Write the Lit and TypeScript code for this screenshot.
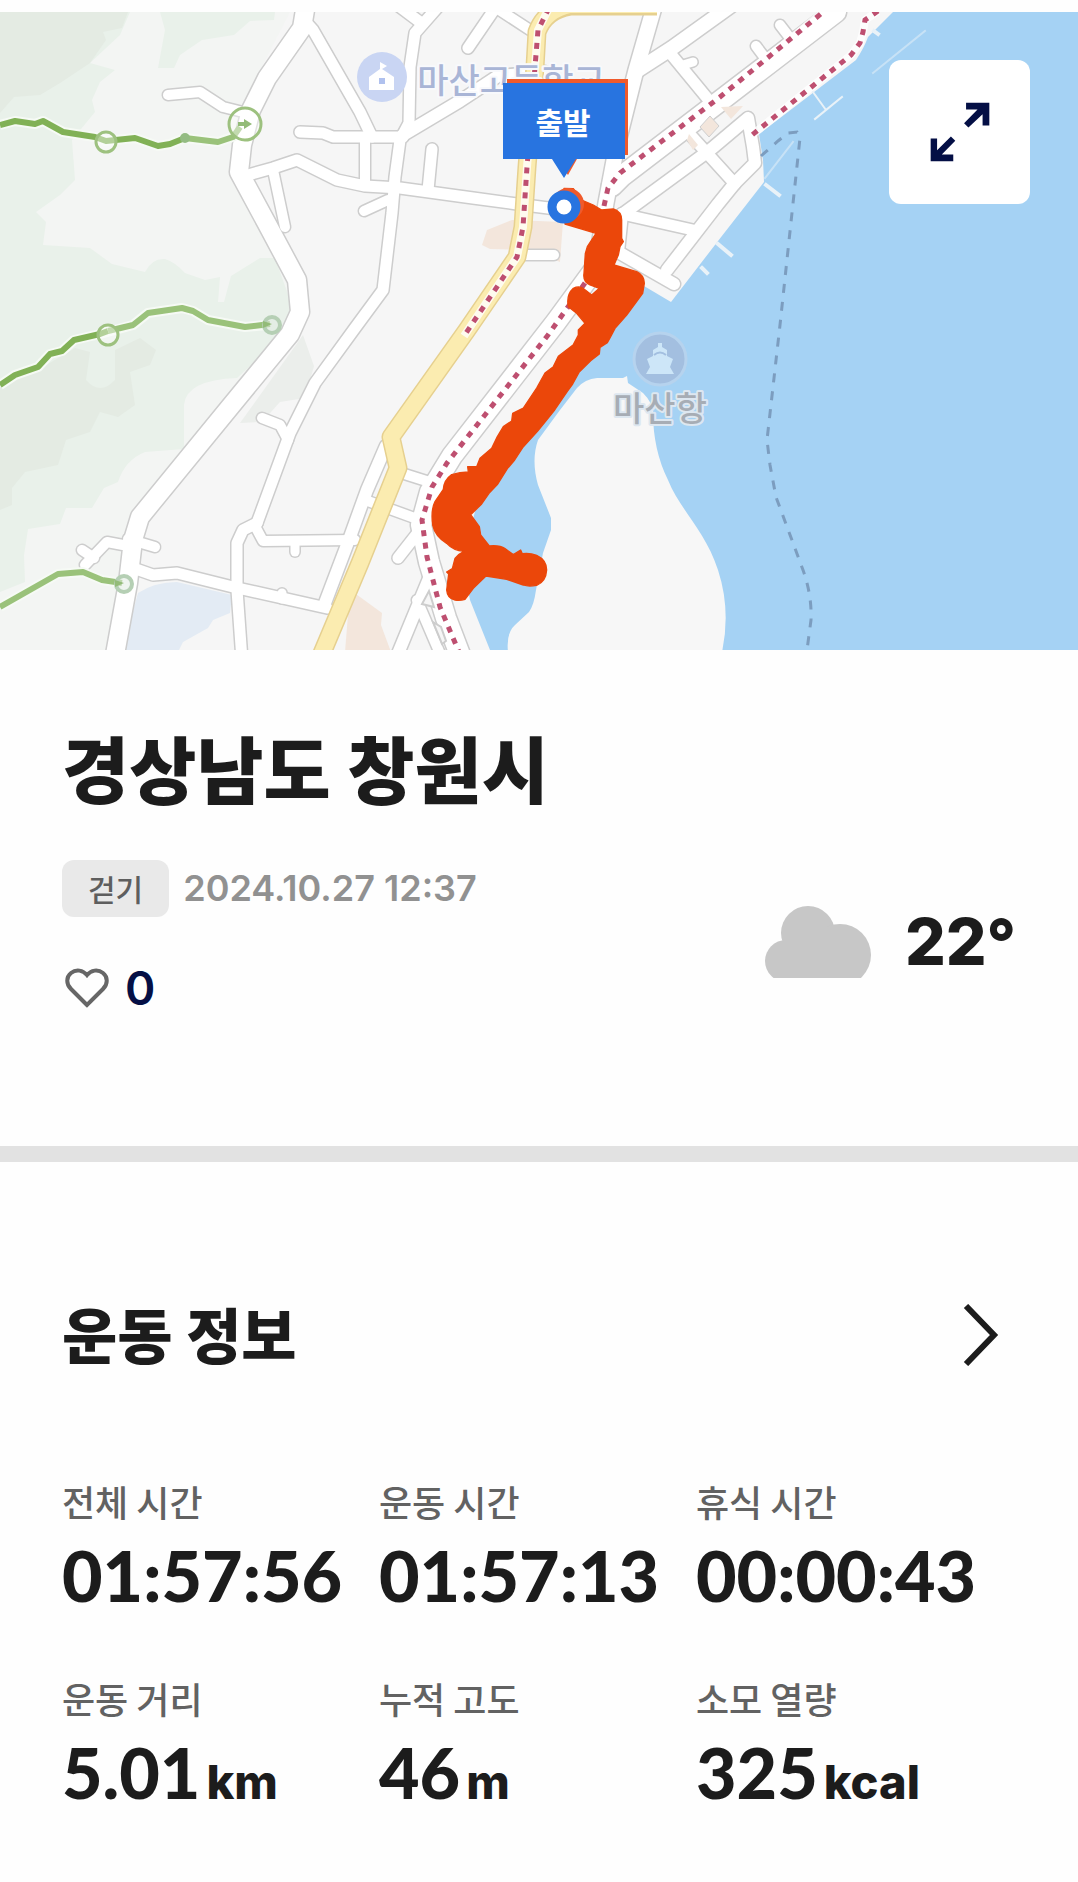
import { LitElement, html, svg, css } from "lit";
import { customElement, property } from "lit/decorators.js";

interface Stat {
  label: string;
  value: string;
  unit?: string;
}

const STATS: Stat[] = [
  { label: "전체 시간", value: "01:57:56" },
  { label: "운동 시간", value: "01:57:13" },
  { label: "휴식 시간", value: "00:00:43" },
  { label: "운동 거리", value: "5.01", unit: "km" },
  { label: "누적 고도", value: "46", unit: "m" },
  { label: "소모 열량", value: "325", unit: "kcal" },
];

/* Streets as [width, path]; drawn once as a casing and once as the surface. */
const STREETS: [number, string][] = [
  [18, "M306 4L302 28L267 78L251 110L242 145L239 172L266 222L297 280L300 312L290 334L230 407L140 517L133 540L128 583L114 660"],
  [11, "M304 20L313 30L360 112L372 137"],
  [10, "M168 95L200 92L223 107L243 112"],
  [11, "M300 132L323 133L333 137H403"],
  [11, "M238 176L248 175L273 168L297 160L337 180L365 186L400 188L473 198L517 204L564 210"],
  [10, "M273 170L285 227"],
  [11, "M437 8L415 33L410 67L409 123L400 140L395 177L392 213L383 290L355 328L315 383L290 433L257 523"],
  [10, "M365 140V186"],
  [10, "M364 211L388 200"],
  [11, "M432 149L428 190"],
  [12, "M403 135L460 101L498 76L545 72"],
  [11, "M498 4L468 48"],
  [10, "M484 0L530 30"],
  [11, "M396 4L420 22"],
  [10, "M525 255H554"],
  [10, "M262 418L280 425L288 440"],
  [11, "M257 523L243 530L237 543L237 590L242 660"],
  [10, "M255 526L263 541L355 540"],
  [9, "M295 545V552"],
  [11, "M133 568L153 575L177 573L233 587L327 608"],
  [9, "M282 593V599"],
  [10, "M128 539L155 547"],
  [10, "M123 545L107 542L85 565"],
  [10, "M82 550L94 558"],
  [12, "M386 446L367 490L350 537L325 603"],
  [10, "M398 472L436 484"],
  [10, "M365 500L420 520"],
  [11, "M420 530L398 558"],
  [12, "M430 576L397 656"],
  [10, "M417 600L441 656"],
  [20, "M600 262L556 322L452 456L430 492L421 525L429 562L446 618L462 660"],
  [15, "M655 4L636 70L616 150L606 203L600 240"],
  [14, "M638 70L672 48L736 2"],
  [11, "M670 53L712 104"],
  [9, "M683 65L693 62"],
  [20, "M612 186L622 176L720 101L836 12"],
  [10, "M780 25L790 38"],
  [10, "M756 46L765 58"],
  [11, "M686 130L735 184"],
  [12, "M620 216L710 150L748 118L753 147L755 163L735 183L718 204L667 270"],
  [11, "M622 214L693 230"],
  [12, "M622 214L618 252L674 284"],
];

const RAILS = [
  "M549 8L538 30L535 67L527 167L523 227L517 257L464 336",
  "M604 206L608 188L620 173L720 97L828 8",
  "M585 283L548 335L447 463L432 487L422 520L427 557L440 607L459 652",
  "M878 11L865 20L863 32L860 43L851 55L752 135",
];

const ROUTE =
  "M612 565L640 566L665 600L700 615L725 630L760 627Q785 635 785 660L785 715L790 725L780 740L775 765L762 795L830 815Q853 826 853 850L848 880L800 945L765 985L752 1010L742 1028L720 1042L718 1062L692 1082L657 1117L638 1152L622 1174L604 1200L584 1230L533 1293L488 1343L464 1380L442 1406L412 1454L387 1480L365 1512L332 1544L358 1580L362 1605L388 1638Q420 1635 435 1646L460 1664L482 1650L487 1661Q510 1658 530 1666Q560 1680 560 1710Q558 1745 530 1756Q505 1761 490 1755L440 1738L378 1728L340 1765L315 1798Q300 1803 285 1800Q262 1796 260 1770L266 1722L260 1716L277 1706L285 1675Q295 1662 312 1654Q280 1652 260 1630Q225 1608 218 1575Q212 1530 225 1505L250 1468Q252 1440 275 1424L300 1418L325 1416L323 1400L350 1400L360 1375L395 1345L412 1310L430 1280L455 1263L458 1240L490 1224L530 1164L555 1119L580 1100L595 1069L640 1034L655 1005L655 990L675 970L650 940L625 920Q618 885 640 865Q660 855 675 869L695 885L718 865L690 855Q668 845 672 820L676 760L682 740L708 700L615 672Z";

@customElement("course-map")
export class CourseMap extends LitElement {
  static styles = css`
    :host {
      display: block;
      position: relative;
    }
    .canvas {
      display: block;
      width: 100%;
      height: auto;
    }
    .place,
    .pin-text {
      font-family: "Noto Sans CJK KR", sans-serif;
      text-anchor: middle;
    }
    .place {
      font-size: 34px;
      font-weight: 500;
      paint-order: stroke;
      stroke-width: 4px;
      stroke-linejoin: round;
    }
    .school {
      fill: #a9b5d6;
      stroke: #f8f9fc;
    }
    .port {
      fill: #a7adb5;
      stroke: #dde7f0;
    }
    .pin-text {
      font-size: 30px;
      font-weight: 700;
      fill: #fff;
    }
    .expand {
      position: absolute;
      top: 48px;
      right: 48px;
      display: flex;
      align-items: center;
      justify-content: center;
      width: 141px;
      height: 144px;
      padding: 0;
      border: 0;
      border-radius: 12px;
      background: #fff;
      cursor: pointer;
    }
    .expand svg {
      width: 60px;
      height: 60px;
    }
  `;

  render() {
    return html`
      <svg class="canvas" viewBox="0 12 1078 638" role="img" aria-label="이동 경로 지도">
        <rect y="12" width="1078" height="638" fill="#f6f6f6" />
        <path fill="#f3f5f3" d="M0 12H290L250 90L240 170L300 290L290 335L130 530L110 650H0Z" />
        <path fill="#e9f1ea" d="M0 12H130L120 35L90 63L115 70L100 82L92 100L95 112L72 140L75 180L60 195L36 212L46 222L43 245L90 248L112 264L145 272Q152 258 165 259Q175 262 185 273L205 280L220 277L218 302H224L231 276L260 258L275 258L290 300V330L237 378Q186 380 184 405V449L145 452Q125 460 118 482L104 488L92 508L66 508L60 524L28 529L24 555L25 582L0 592Z" />
        <path fill="#e9f1ea" d="M160 12H275L274 20L250 21L234 35L202 40L180 55L174 68H158L165 30Z" />
        <path fill="#e4ebe3" d="M0 12H128L122 28L103 32L106 40L90 63L60 83L40 95L14 97L0 113Z" />
        <path fill="#e4ebe3" d="M0 387L38 370L75 348L90 352L86 380Q100 396 115 380V350L140 338L156 350L150 365L130 372L135 405L118 417L100 412L90 432L66 440L58 465L25 472L12 488V505L0 510Z" />
        <path fill="#ebeeeb" d="M303 335L314 366L305 398L280 402L262 422L240 423Z" />
        <path fill="#e3ebf4" d="M138 593Q155 582 177 582L232 595L230 613L213 620L208 628L183 642L178 652H122Z" />
        <path fill="#f3e6dc" d="M482 245L487 230L512 220L563 222L560 262L530 250L490 249Z" />
        <path fill="#f3e6dc" d="M350 590L360 597L382 613L381 625L391 652H345Z" />
        <path fill="#a5d2f4" d="M893 12H1078V650H490L470 600L462 560L484 478L612 332L644 286L671 302L718 241L764 182L763 160L759 134L856 60Q864 48 868 37Z" />
        <path fill="#f7f7f7" d="M508 652Q506 633 515 625L529 612Q534 605 536 590L543 553L551 530V518L538 485Q531 460 538 440L560 410L577 388Q585 379 597 378L623 378L627 376L628 383L643 393Q652 402 653 412Q653 450 668 480C680 510 705 530 718 570Q731 610 722 652Z" />

        <g fill="none" stroke="#cdcdcd" stroke-linecap="round" stroke-linejoin="round">
          ${STREETS.map(([w, d]) => svg`<path stroke-width=${w + 3} d=${d} />`)}
        </g>
        <g fill="none" stroke="#fff" stroke-linecap="round" stroke-linejoin="round">
          ${STREETS.map(([w, d]) => svg`<path stroke-width=${w} d=${d} />`)}
        </g>
        <path fill="#f3e6dc" stroke="#cfcfcf" d="M710 116L719 126L709 137L700 127Z" />
        <path fill="#f3e6dc" d="M689 134L698 145L693 150L687 140ZM721 107L743 106L731 119Z" />
        <path fill="#f6f6f6" stroke="#cdcdcd" stroke-width="2" d="M429 591L434 607L422 604ZM433 622L441 627L446 641L442 644Z" />

        <g fill="none" stroke-linejoin="round">
          <path stroke="#e6d08f" stroke-width="19" d="M657 6H570Q545 10 537 32L535 67L527 167L523 227L517 257L467 330L391 437L398 468L360 563L320 658" />
          <path stroke="#fbecb0" stroke-width="16" d="M657 5H570Q545 10 537 32L535 67L527 167L523 227L517 257L467 330L391 437L398 468L360 563L320 658" />
        </g>
        <g fill="none" stroke="#fff" stroke-opacity=".8" stroke-width="8">
          ${RAILS.map((d) => svg`<path d=${d} />`)}
        </g>
        <g fill="none" stroke="#be4f70" stroke-width="5" stroke-dasharray="6 6.5">
          ${RAILS.map((d) => svg`<path d=${d} />`)}
        </g>

        <g fill="none" stroke="#e9f2f8" stroke-linecap="square">
          <path stroke-width="2" d="M813 92L826 110M842 97L815 119" />
          <path stroke-width="2" stroke-opacity=".5" d="M925 31L873 73M793 142L765 178" />
          <path stroke-width="4" d="M874 31L878 34M766 185L779 195M718 244L731 255M702 268L707 273" />
        </g>
        <path fill="none" stroke="#7c9dbf" stroke-width="3" stroke-dasharray="9 9" d="M761 156L778 141L788 133L797 132L800 138L780 325L767 440L770 465L776 497L803 570Q812 595 811 620L807 650" />

        <g fill="none" stroke-linejoin="round">
          <g stroke="#f6faf5" stroke-width="10">
            <path d="M0 125L15 121L35 124L43 121L63 132L95 137L106 141L135 138L158 146L170 144L185 138L218 142L235 136" />
            <path d="M0 385L15 375L38 367L50 354L62 351L74 340L100 334L133 325L148 313L182 308L193 311L208 320L245 327L266 325" />
            <path d="M0 607L58 574L83 572L102 580L122 583" />
          </g>
          <g stroke="#81b156" stroke-width="6">
            <path d="M0 125L15 121L35 124L43 121L63 132L95 137L106 141L135 138L158 146L170 144L185 138" />
            <path d="M0 385L15 375L38 367L50 354L62 351L74 340L100 334L108 331" />
          </g>
          <g stroke="#9ac27a" stroke-width="6">
            <path d="M185 138L218 142L233 137L240 127" />
            <path d="M108 331L133 325L148 313L182 308L193 311L208 320L245 327L270 324" />
            <path d="M0 607L58 574L83 572L102 580L122 583" />
          </g>
        </g>
        <g fill="#fff" fill-opacity=".4" stroke="#9dc17f" stroke-width="3">
          <circle cx="106" cy="142" r="10" />
          <circle cx="245" cy="124" r="16" />
          <circle cx="108" cy="335" r="10" />
        </g>
        <circle cx="185" cy="138" r="5" fill="#93bb82" />
        <g fill="#dfe9df" fill-opacity=".5" stroke="#b5cfb4" stroke-width="4">
          <circle cx="272" cy="325" r="8" />
          <circle cx="124" cy="584" r="8" />
        </g>
        <path fill="#93bb78" d="M238 122H244V119L252 124L244 129V126H238ZM263 321L272 324L263 328ZM115 580L124 583L115 587Z" />

        <circle cx="382" cy="77" r="25" fill="#c9d5f3" />
        <path fill="#fff" d="M380 64V62L387 66L382 69L394 77V90H369V77L380 69Z" />
        <rect x="379" y="78" width="6" height="6" fill="#b0c1ee" />
        <text class="place school" x="511" y="93">마산고등학교</text>

        <circle cx="660" cy="359" r="26" fill="#a3bfe0" stroke="#b6d3ee" stroke-width="3" />
        <path fill="#cde6f8" d="M658 343H662V347L667 350V356L673 359L670 367L674 374H646L650 367L647 359L653 356V350L658 347Z" />
        <path fill="none" stroke="#a3bfe0" stroke-width="2" d="M654 355Q660 350 666 355" />
        <text class="place port" x="660" y="421">마산항</text>

        <g transform="translate(360 0) scale(.33333)">
          <path fill="#eb470a" stroke="#eb470a" stroke-width="4" stroke-linejoin="round" d=${ROUTE} />
        </g>
        <path fill="#f05a2b" d="M507 79H628V155H507ZM556 159H577L568 175Z" />
        <path fill="#2874e0" d="M503 83H625V159H576L564 178L552 159H503Z" />
        <text class="pin-text" x="563" y="134">출발</text>
        <circle cx="568" cy="204" r="16" fill="#f05a2b" />
        <circle cx="564" cy="207" r="12" fill="#fff" stroke="#2874e0" stroke-width="9" />
      </svg>
      <button class="expand" type="button" aria-label="지도 확대">
        <svg viewBox="0 0 178 178" aria-hidden="true" fill="#040f45">
          <path d="M107 2H176V70H156V36L114 76L101 63L141 22H107Z" />
          <path d="M2 108H21V143L62 102L75 115L35 156H69V176H2Z" />
        </svg>
      </button>
    `;
  }
}

@customElement("stat-item")
export class StatItem extends LitElement {
  @property() label = "";
  @property() value = "";
  @property() unit = "";

  static styles = css`
    :host {
      display: block;
      white-space: nowrap;
    }
    .label {
      font-size: 36px;
      line-height: 44px;
      font-weight: 500;
      color: #626262;
    }
    .reading {
      display: flex;
      align-items: baseline;
      gap: 6px;
      margin-top: 22px;
      line-height: 60px;
      color: #1c1c1c;
    }
    .value {
      font-family: Lato, sans-serif;
      font-size: 70px;
      font-weight: 900;
    }
    .unit {
      font-family: Inter, sans-serif;
      font-size: 47px;
      font-weight: 800;
    }
  `;

  render() {
    return html`
      <div class="label">${this.label}</div>
      <div class="reading">
        <span class="value">${this.value}</span>
        ${this.unit ? html`<span class="unit">${this.unit}</span>` : null}
      </div>
    `;
  }
}

@customElement("app-root")
export class AppRoot extends LitElement {
  static styles = css`
    :host {
      display: block;
      padding-top: 12px;
      background: #fefefe;
      color: #1c1c1c;
      font-family: "Noto Sans CJK KR", sans-serif;
    }
    .summary {
      padding: 72px 62px 134px;
      border-bottom: 16px solid #e2e2e2;
    }
    .title {
      margin: 0;
      font-size: 73px;
      line-height: 88px;
      font-weight: 900;
    }
    .meta {
      display: flex;
      justify-content: space-between;
      align-items: center;
      margin-top: 50px;
    }
    .when {
      display: flex;
      align-items: center;
      gap: 14px;
    }
    .badge {
      padding: 0 26px;
      border-radius: 12px;
      background: #e9e9e9;
      color: #5e5e5e;
      font-size: 30px;
      line-height: 57px;
      font-weight: 500;
    }
    .date {
      font-family: Inter, sans-serif;
      font-size: 36px;
      line-height: 57px;
      font-weight: 600;
      color: #919191;
    }
    .like {
      display: flex;
      align-items: center;
      gap: 16px;
      margin-top: 47px;
      padding: 0 0 0 3px;
      border: 0;
      background: none;
      color: #040f45;
      font-family: Inter, sans-serif;
      font-size: 46px;
      line-height: 48px;
      font-weight: 600;
      cursor: pointer;
    }
    .heart {
      width: 44px;
      height: 40px;
    }
    .weather {
      display: flex;
      align-items: center;
      gap: 34px;
      padding-top: 12px;
      font-family: Inter, sans-serif;
      font-size: 64px;
      line-height: 72px;
      font-weight: 800;
    }
    .cloud {
      width: 106px;
      height: 72px;
    }
    .workout {
      padding: 135px 65px 78px 62px;
    }
    .head {
      display: flex;
      justify-content: space-between;
      align-items: center;
    }
    .subtitle {
      margin: 0;
      font-size: 60px;
      line-height: 72px;
      font-weight: 900;
    }
    .more {
      display: flex;
      margin-right: 14px;
      padding: 4px 0 0;
      border: 0;
      background: none;
      cursor: pointer;
    }
    .chevron {
      width: 36px;
      height: 62px;
    }
    .stats {
      display: grid;
      grid-template-columns: repeat(3, minmax(0, 1fr));
      row-gap: 71px;
      margin-top: 110px;
    }
  `;

  render() {
    return html`
      <course-map></course-map>
      <section class="summary">
        <h1 class="title">경상남도 창원시</h1>
        <div class="meta">
          <div>
            <div class="when">
              <span class="badge">걷기</span>
              <time class="date" datetime="2024-10-27T12:37">2024.10.27 12:37</time>
            </div>
            <button class="like" type="button" aria-label="좋아요 0">
              <svg class="heart" viewBox="0 0 44 40" fill="none" stroke="#666" stroke-width="4" aria-hidden="true">
                <path d="M22 37L6 21C1 16 1 9 6 5C11 1 18 2 22 7C26 2 33 1 38 5C43 9 43 16 38 21Z" />
              </svg>
              <span>0</span>
            </button>
          </div>
          <div class="weather">
            <svg class="cloud" viewBox="0 0 106 72" fill="#c7c7c7" role="img" aria-label="흐림">
              <circle cx="21" cy="55" r="21" />
              <circle cx="43" cy="27" r="27" />
              <circle cx="75" cy="49" r="31" />
              <path d="M16 36H60V72H16Z" />
            </svg>
            <span>22°</span>
          </div>
        </div>
      </section>
      <section class="workout">
        <div class="head">
          <h2 class="subtitle">운동 정보</h2>
          <button class="more" type="button" aria-label="운동 정보 더보기">
            <svg class="chevron" viewBox="0 0 36 62" fill="none" stroke="#1c1c1c" stroke-width="6" aria-hidden="true">
              <path d="M3 2L31 31L3 60" />
            </svg>
          </button>
        </div>
        <div class="stats">
          ${STATS.map(
            (s) => html`<stat-item .label=${s.label} .value=${s.value} .unit=${s.unit ?? ""}></stat-item>`
          )}
        </div>
      </section>
    `;
  }
}
